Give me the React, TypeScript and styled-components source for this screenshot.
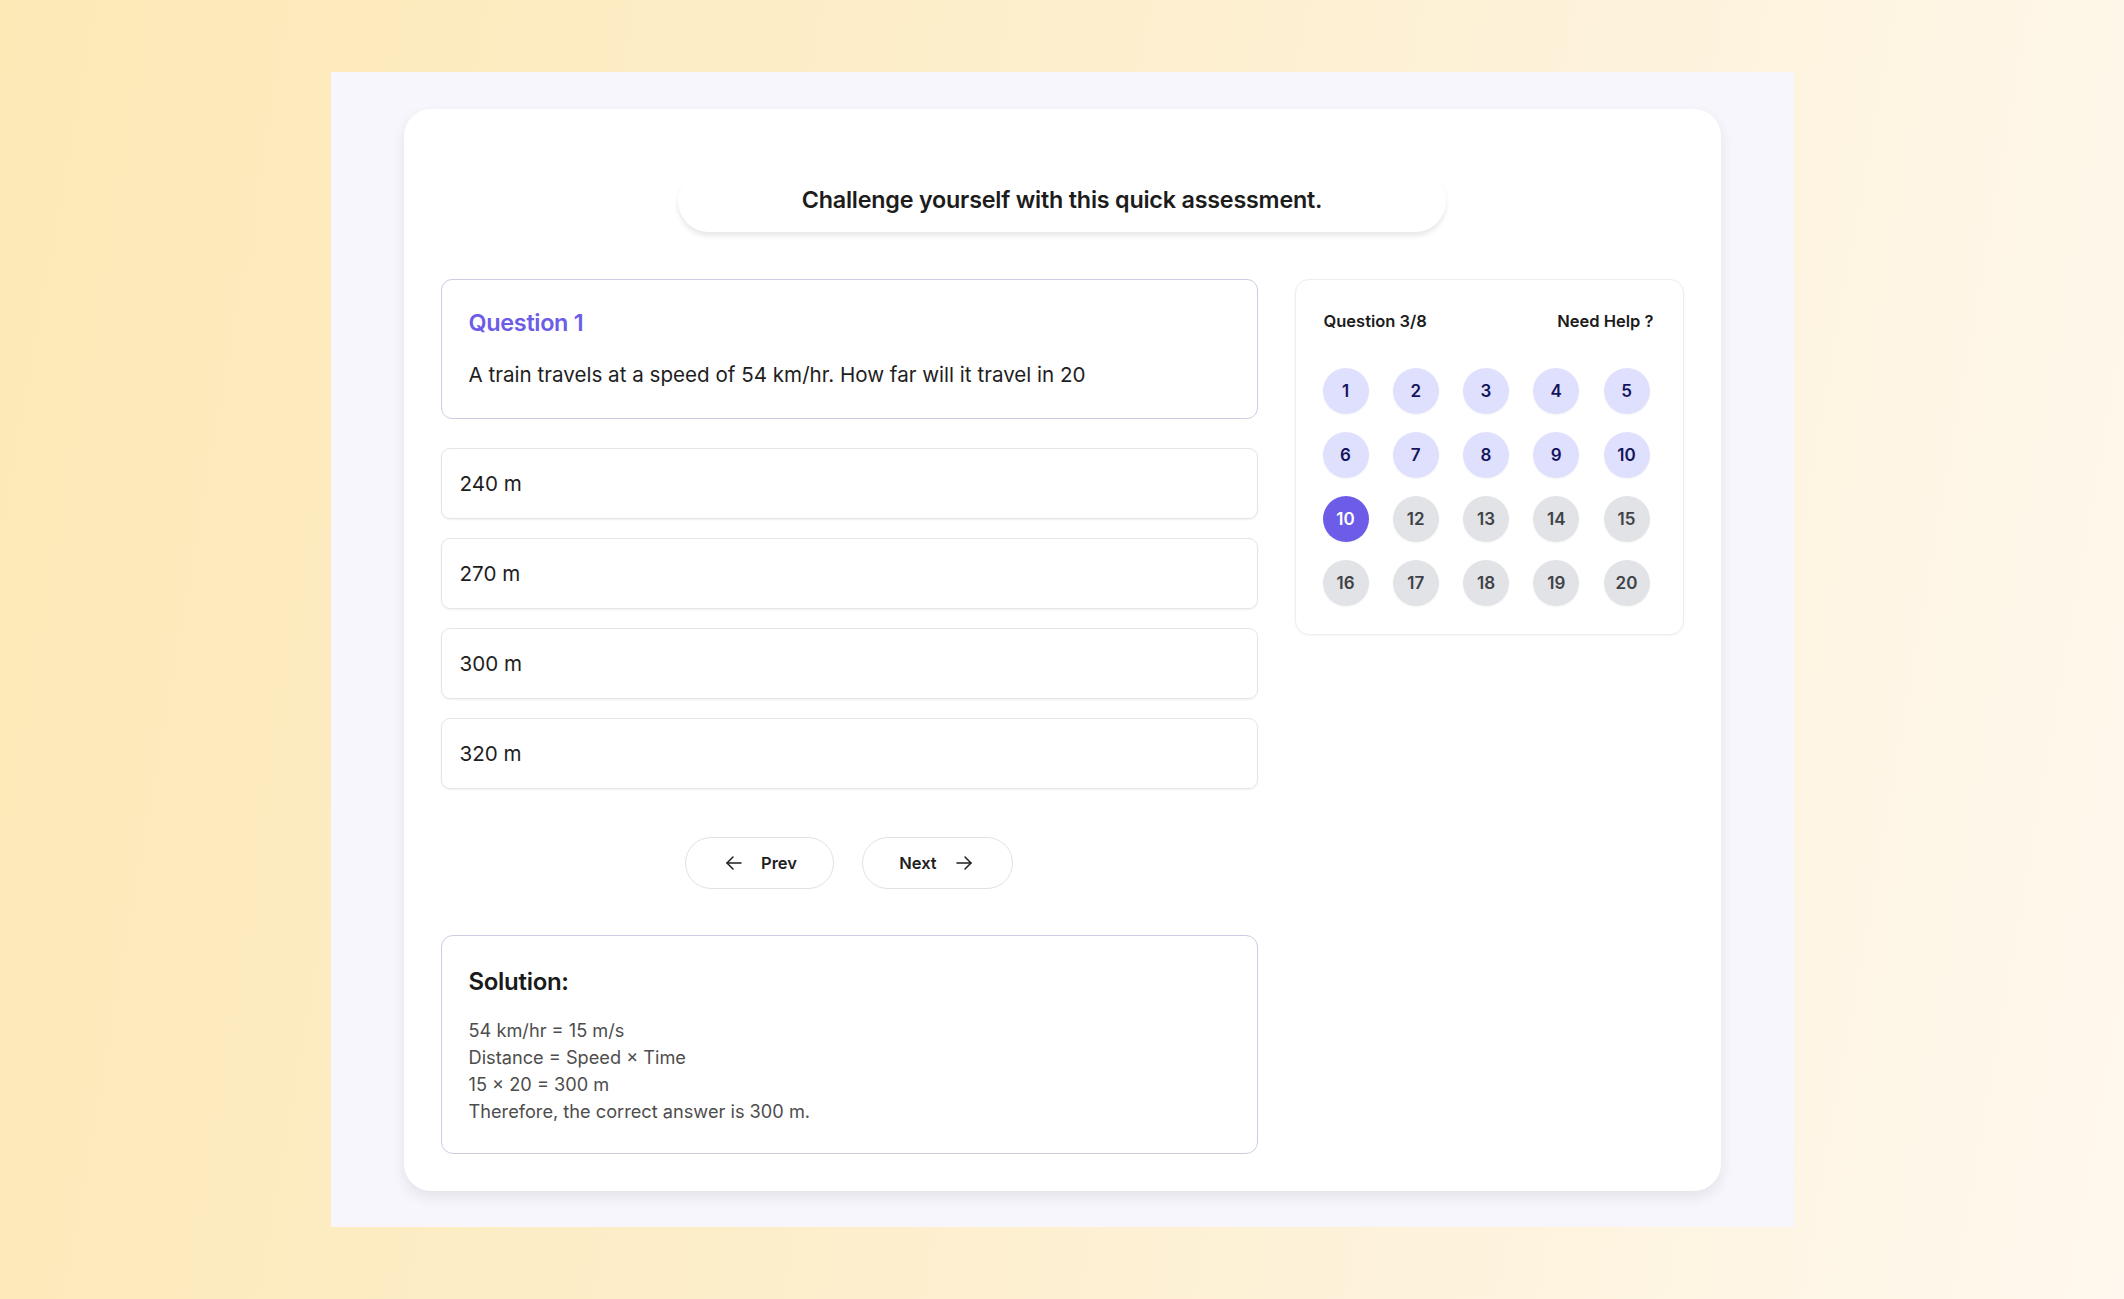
import React from "react";
import styled, { createGlobalStyle } from "styled-components";

const GlobalStyle = createGlobalStyle`
  html, body {
    margin: 0;
    padding: 0;
  }
  body {
    font-family: Inter, "Noto Sans", "Liberation Sans", sans-serif;
    background: linear-gradient(100deg, #fde9b6 0%, #fdefcf 50%, #fef8ee 100%);
    min-height: 100vh;
    color: #1f1f1f;
  }
`;

const Page = styled.div`
  min-height: 100vh;
  display: flex;
  align-items: center;
  justify-content: center;
`;

const Panel = styled.div`
  width: 1463px;
  background: #f7f6fc;
  padding: 37px 73px 36px;
  box-sizing: border-box;
`;

const Card = styled.div`
  background: #ffffff;
  border-radius: 27px;
  box-shadow: 0 6px 14px rgba(30, 30, 60, 0.09);
  padding: 61px 37px 37px;
  display: flex;
  flex-direction: column;
  align-items: center;
`;

const TitlePill = styled.div`
  width: 768px;
  height: 62px;
  border-radius: 31px;
  background: #ffffff;
  box-shadow: 0 4px 5px rgba(0, 0, 0, 0.09);
  display: flex;
  align-items: center;
  justify-content: center;
  padding-bottom: 3px;
  box-sizing: border-box;
  font-size: 23.3px;
  font-weight: 600;
  letter-spacing: -0.2px;
  color: #1c1c1c;
`;

const Content = styled.div`
  margin-top: 47px;
  width: 100%;
  display: flex;
  gap: 37px;
  align-items: flex-start;
`;

const MainColumn = styled.div`
  width: 817px;
  display: flex;
  flex-direction: column;
`;

const QuestionBox = styled.div`
  border: 1.5px solid #cdcce2;
  border-radius: 11px;
  padding: 29px 27px 29px;
  height: 140px;
  box-sizing: border-box;
`;

const QuestionLabel = styled.div`
  color: #6c5ce7;
  font-size: 23.4px;
  font-weight: 600;
  line-height: 28px;
  letter-spacing: -0.3px;
`;

const QuestionText = styled.div`
  margin-top: 24px;
  font-size: 20.6px;
  line-height: 28px;
  color: #1e1e1e;
`;

const Options = styled.div`
  margin-top: 29px;
  display: flex;
  flex-direction: column;
  gap: 19px;
`;

const Option = styled.div`
  height: 71px;
  box-sizing: border-box;
  border: 1px solid #e3e5e8;
  border-radius: 9px;
  box-shadow: 0 1px 2px rgba(0, 0, 0, 0.06);
  display: flex;
  align-items: center;
  padding-left: 18px;
  font-size: 20.6px;
  color: #1e1e1e;
`;

const NavRow = styled.div`
  margin-top: 48px;
  display: flex;
  justify-content: center;
  gap: 28px;
`;

const NavButton = styled.button<{ $width: number }>`
  width: ${(p) => p.$width}px;
  height: 52px;
  border-radius: 26px;
  border: 1px solid #e2e2e4;
  background: #ffffff;
  display: flex;
  align-items: center;
  justify-content: center;
  gap: 15px;
  font-family: inherit;
  font-size: 16.5px;
  font-weight: 600;
  color: #1f1f1f;
  cursor: pointer;
  padding: 0;
`;

const SolutionBox = styled.div`
  margin-top: 46px;
  border: 1.5px solid #cdcce2;
  border-radius: 12px;
  padding: 32px 27px 0;
  height: 219px;
  box-sizing: border-box;
`;

const SolutionTitle = styled.div`
  font-size: 24px;
  font-weight: 600;
  line-height: 28px;
  color: #1a1a1a;
  letter-spacing: -0.3px;
`;

const SolutionLines = styled.div`
  margin-top: 21px;
  font-size: 18.2px;
  line-height: 27px;
  color: #4d4d4d;
`;

const SidePanel = styled.div`
  flex: 1;
  border: 1px solid #ededf1;
  border-radius: 14px;
  box-shadow: 0 1px 3px rgba(0, 0, 0, 0.04);
  padding: 31px 29px 28px 27px;
  box-sizing: border-box;
  height: 356px;
`;

const SideHeader = styled.div`
  display: flex;
  justify-content: space-between;
  align-items: center;
  padding-left: 1px;
  font-size: 16.5px;
  font-weight: 600;
  line-height: 20px;
  color: #1c1c1c;
`;

const Grid = styled.div`
  margin-top: 37px;
  display: grid;
  grid-template-columns: repeat(5, 46px);
  justify-content: space-between;
  row-gap: 18px;
  padding-right: 4px;
`;

type Status = "done" | "current" | "todo";

const Bubble = styled.div<{ $status: Status }>`
  width: 46px;
  height: 46px;
  border-radius: 50%;
  display: flex;
  align-items: center;
  justify-content: center;
  font-size: 17px;
  font-weight: 600;
  box-shadow: 0 1px 2px rgba(0, 0, 0, 0.05);
  background: ${(p) =>
    p.$status === "current" ? "#6c5ce7" : p.$status === "done" ? "#dfe0fe" : "#e1e3e6"};
  color: ${(p) =>
    p.$status === "current" ? "#ffffff" : p.$status === "done" ? "#14155c" : "#3f4247"};
`;

const ArrowIcon = ({ dir }: { dir: "left" | "right" }) => (
  <svg width="24" height="24" viewBox="0 0 24 24" fill="none" stroke="#1f1f1f"
       strokeWidth="1.5" strokeLinecap="round" strokeLinejoin="round">
    {dir === "left" ? (
      <>
        <path d="M19 12H5" />
        <path d="m11 18-6-6 6-6" />
      </>
    ) : (
      <>
        <path d="M5 12h14" />
        <path d="m13 6 6 6-6 6" />
      </>
    )}
  </svg>
);

const options = ["240 m", "270 m", "300 m", "320 m"];

const bubbles: { label: string; status: Status }[] = [
  ...["1", "2", "3", "4", "5", "6", "7", "8", "9", "10"].map((l) => ({ label: l, status: "done" as Status })),
  { label: "10", status: "current" },
  ...["12", "13", "14", "15", "16", "17", "18", "19", "20"].map((l) => ({ label: l, status: "todo" as Status })),
];

export default function App() {
  return (
    <>
      <GlobalStyle />
      <Page>
        <Panel>
          <Card>
            <TitlePill>Challenge yourself with this quick assessment.</TitlePill>
            <Content>
              <MainColumn>
                <QuestionBox>
                  <QuestionLabel>Question 1</QuestionLabel>
                  <QuestionText>
                    A train travels at a speed of 54 km/hr. How far will it travel in 20
                  </QuestionText>
                </QuestionBox>
                <Options>
                  {options.map((o) => (
                    <Option key={o}>{o}</Option>
                  ))}
                </Options>
                <NavRow>
                  <NavButton $width={149}>
                    <ArrowIcon dir="left" />
                    Prev
                  </NavButton>
                  <NavButton $width={151}>
                    Next
                    <ArrowIcon dir="right" />
                  </NavButton>
                </NavRow>
                <SolutionBox>
                  <SolutionTitle>Solution:</SolutionTitle>
                  <SolutionLines>
                    <div>54 km/hr = 15 m/s</div>
                    <div>Distance = Speed × Time</div>
                    <div>15 × 20 = 300 m</div>
                    <div>Therefore, the correct answer is 300 m.</div>
                  </SolutionLines>
                </SolutionBox>
              </MainColumn>
              <SidePanel>
                <SideHeader>
                  <span>Question 3/8</span>
                  <span>Need Help ?</span>
                </SideHeader>
                <Grid>
                  {bubbles.map((b, i) => (
                    <Bubble key={i} $status={b.status}>{b.label}</Bubble>
                  ))}
                </Grid>
              </SidePanel>
            </Content>
          </Card>
        </Panel>
      </Page>
    </>
  );
}
